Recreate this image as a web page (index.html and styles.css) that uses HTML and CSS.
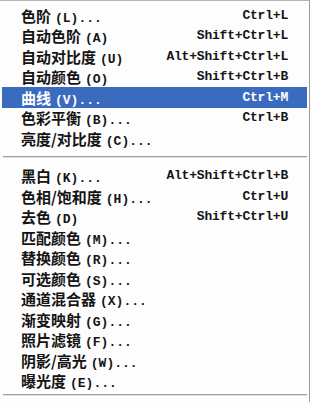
FILE: index.html
```
<!DOCTYPE html>
<html lang="zh-CN">
<head>
    <meta charset="UTF-8">
    <meta name="viewport" content="width=device-width, initial-scale=1.0">
    <title>调整菜单</title>
    <link rel="stylesheet" href="styles.css">
</head>
<body>
    <div class="menu">
        <ul class="group">
            <li class="item"><span class="label">色阶<span class="key">(L)...</span></span><span class="shortcut">Ctrl+L</span></li>
            <li class="item"><span class="label">自动色阶<span class="key">(A)</span></span><span class="shortcut">Shift+Ctrl+L</span></li>
            <li class="item"><span class="label">自动对比度<span class="key">(U)</span></span><span class="shortcut">Alt+Shift+Ctrl+L</span></li>
            <li class="item"><span class="label">自动颜色<span class="key">(O)</span></span><span class="shortcut">Shift+Ctrl+B</span></li>
            <li class="item active"><span class="label">曲线<span class="key">(V)...</span></span><span class="shortcut">Ctrl+M</span></li>
            <li class="item"><span class="label">色彩平衡<span class="key">(B)...</span></span><span class="shortcut">Ctrl+B</span></li>
            <li class="item"><span class="label">亮度/对比度<span class="key">(C)...</span></span></li>
        </ul>
        <div class="separator"></div>
        <ul class="group">
            <li class="item"><span class="label">黑白<span class="key">(K)...</span></span><span class="shortcut">Alt+Shift+Ctrl+B</span></li>
            <li class="item"><span class="label">色相/饱和度<span class="key">(H)...</span></span><span class="shortcut">Ctrl+U</span></li>
            <li class="item"><span class="label">去色<span class="key">(D)</span></span><span class="shortcut">Shift+Ctrl+U</span></li>
            <li class="item"><span class="label">匹配颜色<span class="key">(M)...</span></span></li>
            <li class="item"><span class="label">替换颜色<span class="key">(R)...</span></span></li>
            <li class="item"><span class="label">可选颜色<span class="key">(S)...</span></span></li>
            <li class="item"><span class="label">通道混合器<span class="key">(X)...</span></span></li>
            <li class="item"><span class="label">渐变映射<span class="key">(G)...</span></span></li>
            <li class="item"><span class="label">照片滤镜<span class="key">(F)...</span></span></li>
            <li class="item"><span class="label">阴影/高光<span class="key">(W)...</span></span></li>
            <li class="item"><span class="label">曝光度<span class="key">(E)...</span></span></li>
        </ul>
        <div class="separator bottom"></div>
    </div>
</body>
</html>
```
FILE: styles.css
```
body {
    margin: 0;
    padding: 0;
    background-color: #fdfdfd;
    font-family: "Noto Sans CJK SC", "Liberation Sans", sans-serif;
    color: #141414;
}
.menu {
    width: 310px;
    height: 402px;
    box-sizing: border-box;
    border-top: 1px solid #b4b4b4;
    border-right: 1px solid #9c9c9c;
    padding: 4px 0 0 2px;
    background-color: #fdfdfd;
}
.group {
    list-style: none;
    margin: 0;
    padding: 0;
}
.item {
    display: flex;
    justify-content: space-between;
    align-items: center;
    height: 20.5px;
    padding: 0 21px 0 19px;
    font-size: 15px;
    font-weight: 600;
}
.item.active {
    margin-right: 2px;
    background-color: #3b6bbf;
    color: #fff;
}
.key {
    margin-left: 4px;
    font-family: "Liberation Mono", monospace;
    font-size: 13px;
    font-weight: 700;
}
.shortcut {
    font-family: "Liberation Mono", monospace;
    font-size: 13px;
    font-weight: 700;
    letter-spacing: -0.2px;
}
.item.active .shortcut {
    margin-right: -2px;
}
.separator {
    height: 2px;
    margin: 7px 2px 8px 1px;
    border-top: 1px solid #9e9e9e;
    background-color: #e2e2e2;
    box-sizing: border-box;
}
.separator.bottom {
    margin: 3px 2px 0 1px;
}
```
